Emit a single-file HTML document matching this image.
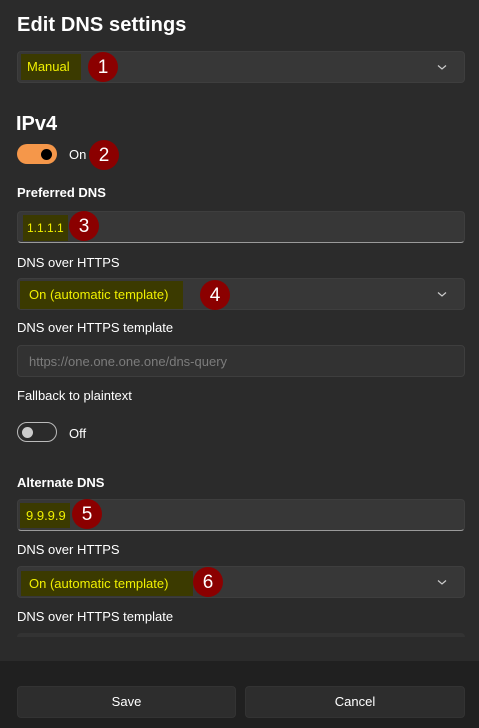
<!DOCTYPE html>
<html><head><style>
*{margin:0;padding:0;box-sizing:border-box}
body{width:479px;height:728px;background:#2b2b2b;font-family:"Liberation Sans",sans-serif;color:#fff;position:relative;overflow:hidden}
.a{position:absolute}
.t{font-size:13px;color:#fff}
.b{font-weight:bold;font-size:13px}
.box{position:absolute;left:17px;width:448px;height:32px;background:#373737;border-radius:4px;border:1px solid #3e3e3e}
.tb{border-bottom:1px solid #9a9a9a}
.hl{position:absolute;background:#3b3a00;color:#f0f000;font-size:13px;line-height:26px;padding-left:6px}
.bd{position:absolute;width:30px;height:30px;border-radius:50%;background:#8b0000;color:#fff;font-size:19px;text-align:center;line-height:32px}
.chev{position:absolute;right:16px;top:9px}
</style></head><body>
<div class="a" style="left:17px;top:14px;font-size:20px;font-weight:bold;letter-spacing:0.1px">Edit DNS settings</div>

<div class="box" style="top:51px"><svg class="chev" width="12" height="12" viewBox="0 0 12 12"><path d="M2 4.5L6 8L10 4.5" stroke="#ccc" stroke-width="1.2" fill="none"/></svg></div>
<div class="hl" style="left:21px;top:54px;width:60px">Manual</div>
<div class="bd" style="left:88px;top:52px">1</div>

<div class="a" style="left:16px;top:113px;font-size:20px;font-weight:bold">IPv4</div>
<div class="a" style="left:17px;top:144px;width:40px;height:20px;border-radius:10px;background:#f5974a"></div>
<div class="a" style="left:41px;top:149px;width:11px;height:11px;border-radius:50%;background:#000"></div>
<div class="a t" style="left:69px;top:147px">On</div>
<div class="bd" style="left:89px;top:140px">2</div>

<div class="a b" style="left:17px;top:185px">Preferred DNS</div>
<div class="box tb" style="top:211px"></div>
<div class="hl" style="left:23px;top:215px;width:45px;padding-left:4px;font-size:12px">1.1.1.1</div>
<div class="bd" style="left:69px;top:211px">3</div>

<div class="a t" style="left:17px;top:255px">DNS over HTTPS</div>
<div class="box" style="top:278px"><svg class="chev" width="12" height="12" viewBox="0 0 12 12"><path d="M2 4.5L6 8L10 4.5" stroke="#ccc" stroke-width="1.2" fill="none"/></svg></div>
<div class="hl" style="left:20px;top:281px;width:163px;height:28px;line-height:28px;padding-left:9px">On (automatic template)</div>
<div class="bd" style="left:200px;top:280px">4</div>

<div class="a t" style="left:17px;top:320px">DNS over HTTPS template</div>
<div class="box" style="top:345px;background:#323232"><span class="a" style="left:11px;top:8px;font-size:13px;color:#7c7c7c">https://one.one.one.one/dns-query</span></div>

<div class="a t" style="left:17px;top:388px">Fallback to plaintext</div>
<div class="a" style="left:17px;top:422px;width:40px;height:20px;border-radius:10px;border:1px solid #bbb"></div>
<div class="a" style="left:22px;top:427px;width:11px;height:11px;border-radius:50%;background:#ccc"></div>
<div class="a t" style="left:69px;top:426px">Off</div>

<div class="a b" style="left:17px;top:475px">Alternate DNS</div>
<div class="box tb" style="top:499px"></div>
<div class="hl" style="left:20px;top:503px;width:50px;height:25px">9.9.9.9</div>
<div class="bd" style="left:72px;top:499px">5</div>

<div class="a t" style="left:17px;top:542px">DNS over HTTPS</div>
<div class="box" style="top:566px"><svg class="chev" width="12" height="12" viewBox="0 0 12 12"><path d="M2 4.5L6 8L10 4.5" stroke="#ccc" stroke-width="1.2" fill="none"/></svg></div>
<div class="hl" style="left:21px;top:571px;width:172px;height:25px;line-height:25px;padding-left:8px">On (automatic template)</div>
<div class="bd" style="left:193px;top:567px">6</div>

<div class="a t" style="left:17px;top:609px">DNS over HTTPS template</div>
<div class="a" style="left:17px;top:633px;width:448px;height:4px;background:#333;border-radius:4px 4px 0 0"></div>

<div class="a" style="left:0;top:661px;width:479px;height:67px;background:#202020"></div>
<div class="a" style="left:17px;top:686px;width:219px;height:32px;background:#2d2d2d;border-radius:4px;border:1px solid #333;text-align:center;line-height:30px;font-size:13px">Save</div>
<div class="a" style="left:245px;top:686px;width:220px;height:32px;background:#2d2d2d;border-radius:4px;border:1px solid #333;text-align:center;line-height:30px;font-size:13px">Cancel</div>
</body></html>
